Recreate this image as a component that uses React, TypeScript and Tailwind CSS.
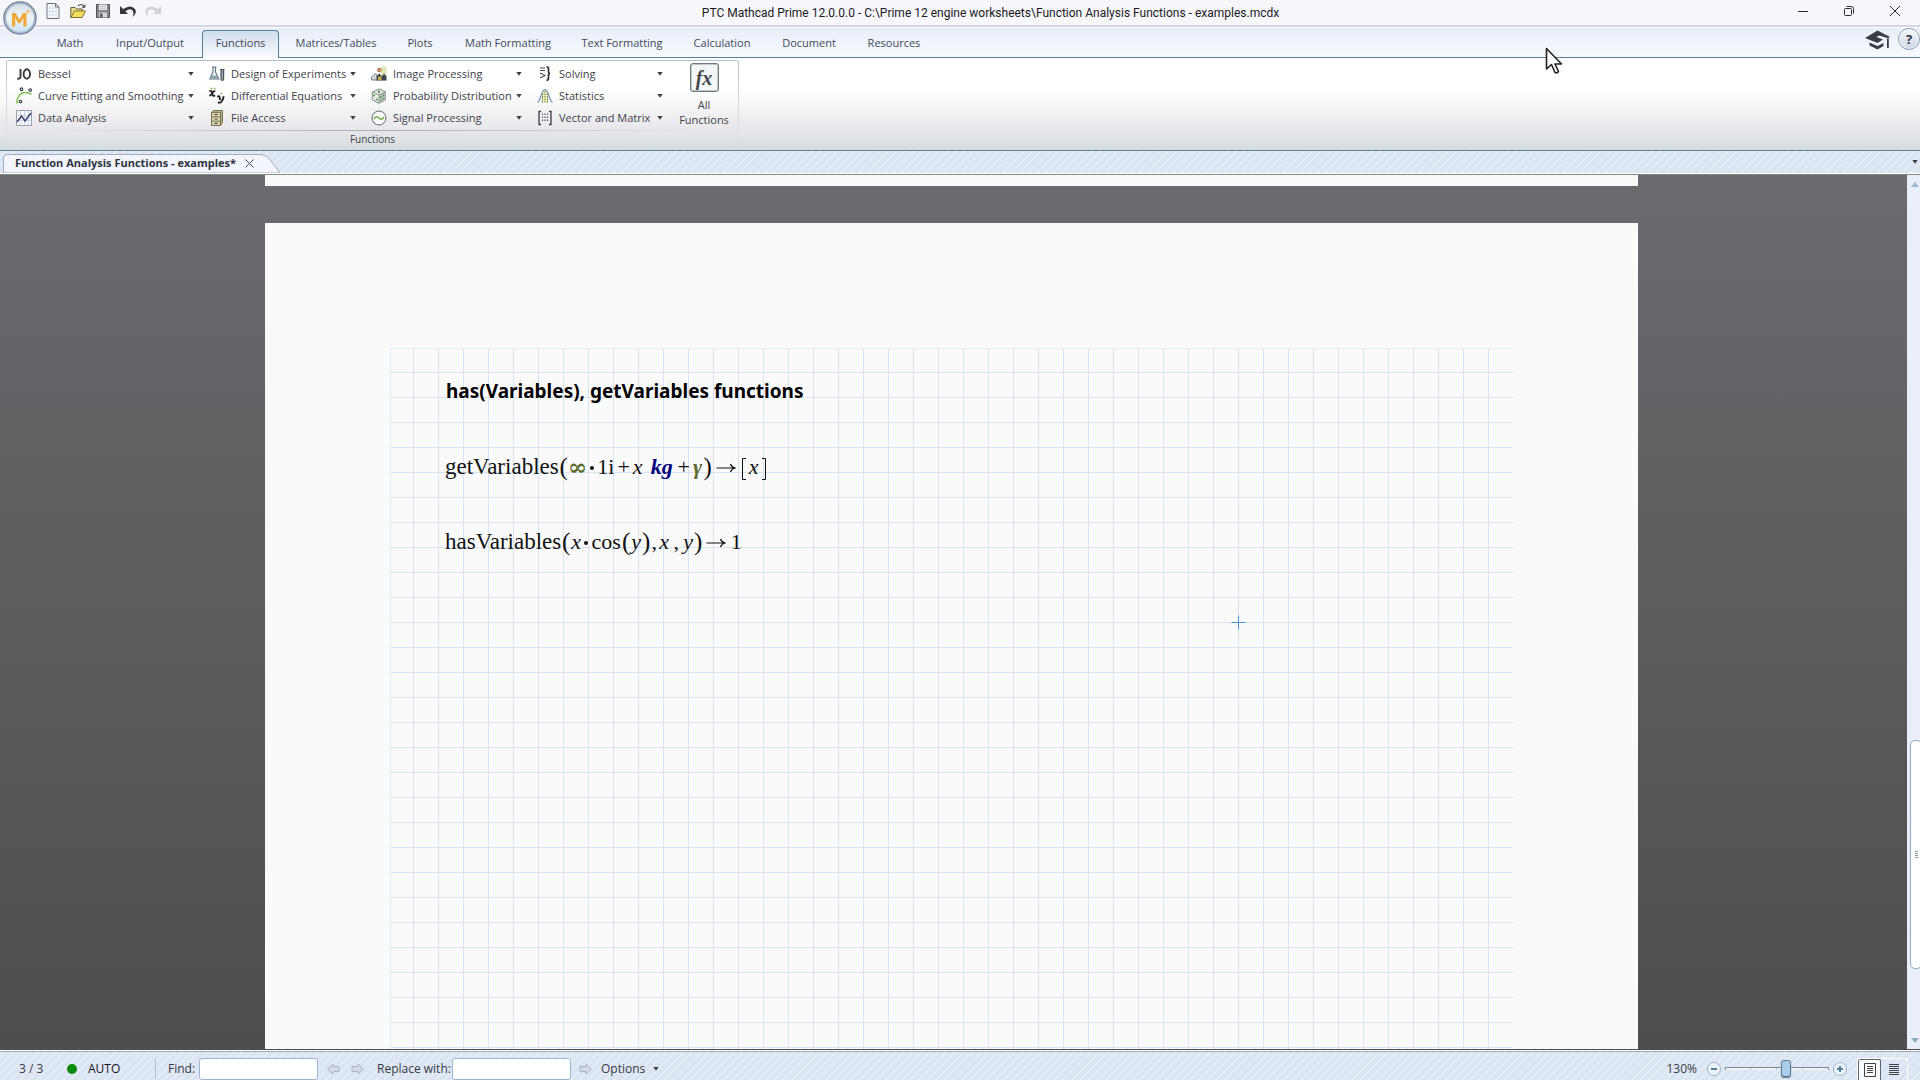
import type { ReactNode } from "react";

const hatch =
    "bg-[#dbe4f2] bg-[repeating-linear-gradient(135deg,#ffffff00_0px,#ffffff00_3px,#ffffff59_4px,#ffffff00_6px)]";

const tabs = [
    { label: "Math", width: "w-[56px]" },
    { label: "Input/Output", width: "w-[94px]" },
    { label: "Functions", width: "w-[77px]" },
    { label: "Matrices/Tables", width: "w-[104px]" },
    { label: "Plots", width: "w-[54px]" },
    { label: "Math Formatting", width: "w-[112px]" },
    { label: "Text Formatting", width: "w-[106px]" },
    { label: "Calculation", width: "w-[84px]" },
    { label: "Document", width: "w-[80px]" },
    { label: "Resources", width: "w-[80px]" },
];

function Icon({ children, size = "size-4" }: { children: ReactNode; size?: string }) {
    return (
        <svg viewBox="0 0 16 16" className={`${size} shrink-0 overflow-visible`} fill="none" aria-hidden="true">
            {children}
        </svg>
    );
}

function Caret() {
    return (
        <svg viewBox="0 0 6 4" className="h-1 w-1.5 shrink-0" fill="#3d4148" aria-hidden="true">
            <path d="M0.3 0h5.4L3 3.8z" />
        </svg>
    );
}

function BesselIcon() {
    return (
        <Icon>
            <path d="M4.500 3v7.500q0 2.500-3.200 2.300" stroke="#33363c" strokeWidth="1.9" />
            <ellipse cx="10.8" cy="8" rx="3.2" ry="4.7" stroke="#33363c" strokeWidth="1.9" />
        </Icon>
    );
}

function CurveIcon() {
    return (
        <Icon>
            <path d="M0.800 15.500C1 8.500 4.500 4.500 9 4.500q4 0 6.500 2" stroke="#86c05a" strokeWidth="1.6" />
            <g stroke="#33363c" fill="#fff" strokeWidth="1.1">
                <circle cx="5.5" cy="1.2" r="1.3" />
                <circle cx="14.2" cy="2" r="1.3" />
                <circle cx="4.5" cy="13.5" r="1.3" />
            </g>
        </Icon>
    );
}

function DataIcon() {
    return (
        <Icon>
            <rect x="0.5" y="0.5" width="15" height="15" fill="#f6f8fb" stroke="#9aa3b0" />
            <path d="M4.5 1v14M8.5 1v14M12.5 1v14M1 5.5h14M1 10.5h14" stroke="#ccd9ea" />
            <path d="M1 12l4.5-6L9 11l6-8" stroke="#3f4274" strokeWidth="1.5" />
        </Icon>
    );
}

function FlaskIcon() {
    return (
        <Icon>
            <path d="M3 1h4.5M4 1v5L0.8 13h9L6.5 6V1" stroke="#62717b" strokeWidth="1.1" fill="#eef5f6" />
            <path d="M2.5 9.5h5.5l1.5 3.3H1z" fill="#8da5ad" />
            <path d="M11 3.5h4.5M12 4v9.5q1.3 2 2.6 0V4" stroke="#4b5359" strokeWidth="1.2" fill="#9aa9b0" />
        </Icon>
    );
}

function DiffIcon() {
    return (
        <Icon>
            <path
                d="M0.5 3.4q1.600-1.200 2.200 0.400l1 3.400q0.500 1.400 2.300 0M6.300 3.200q-1.600-0.400-2.900 1.900T0.300 7.500"
                stroke="#222"
                strokeWidth="1.8"
            />
            <path
                d="M8.300 8.800q1.900-1.200 2.300 0.400l0.500 2.800M14.600 8.300q-0.200 3.700-2.400 5.600-1.500 1.200-3.300 0.500"
                stroke="#222"
                strokeWidth="1.9"
            />
            <path d="M1.6 0.5h1.700M4.700 0.500h1.700M11.500 5.500h1.900" stroke="#88b44c" strokeWidth="1.6" />
        </Icon>
    );
}

function FileIcon() {
    return (
        <Icon>
            <path d="M2.5 2.5l2-2h9v12l-2 3h-9z" fill="#b5ae84" stroke="#6f6b4b" strokeWidth="0.9" />
            <path d="M2.5 2.5h9v13h-9z" fill="#dcd7b2" stroke="#6f6b4b" strokeWidth="0.9" />
            <path d="M3 6.8h8M3 11.2h8" stroke="#6f6b4b" strokeWidth="0.9" />
            <path d="M5.5 4.7h3M5.5 9h3M5.5 13.3h3" stroke="#4d4a35" strokeWidth="1.2" />
        </Icon>
    );
}

function ImageIcon() {
    return (
        <Icon>
            <path d="M10 0.5h5.500v14H10z" fill="#dfe6b4" />
            <path d="M0.5 14v-3l4-3.500 3 3.500v3z" fill="#cfd6da" stroke="#6c7780" strokeWidth="0.9" />
            <path d="M5.500 14.500V10l2.800-2.500L11 10.500l2-3 2.500 3v4z" fill="#3d4652" />
            <path d="M7 10.500h3.500v3.500H7z" fill="#c5ae46" />
            <circle cx="8.3" cy="4" r="1.7" fill="#e0b36a" stroke="#a04a33" strokeWidth="0.9" />
        </Icon>
    );
}

function DiceIcon() {
    return (
        <Icon>
            <path d="M1.2 4.2L8.500 0.800l6 3v8L8 15.300l-6.800-3.500z" fill="#e4ebe2" stroke="#7d8a82" strokeWidth="1" />
            <path d="M8 6.8l6.5-3v8L8 15.3z" fill="#b9c4ba" />
            <path d="M1.2 4.2L8 6.8v8.5M8 6.8l6.5-3" stroke="#7d8a82" strokeWidth="0.8" />
            <g fill="#5c8f4c">
                <circle cx="8" cy="3.7" r="1.2" />
                <circle cx="3" cy="7.5" r="1" />
                <circle cx="5.8" cy="11.5" r="1" />
                <circle cx="10" cy="9" r="0.9" />
                <circle cx="12.5" cy="7.5" r="0.9" />
                <circle cx="10" cy="12.3" r="0.9" />
                <circle cx="12.5" cy="10.8" r="0.9" />
            </g>
        </Icon>
    );
}

function SignalIcon() {
    return (
        <Icon>
            <circle cx="8" cy="8" r="7" fill="#fafcfa" stroke="#5f6a70" strokeWidth="1" />
            <path d="M3 9q2.5-4 5-1t5-1" stroke="#77b04e" strokeWidth="1.5" />
        </Icon>
    );
}

function SolvingIcon() {
    return (
        <Icon>
            <path d="M3 2h5M3 4.5h5M3 7l5 2.5L3 12" stroke="#4a4d54" strokeWidth="1.1" />
            <path d="M9.5 0.8q2 0 2 2V6q0 1.5 1.5 1.5-1.5 0-1.5 1.5v3.3q0 2-2 2" stroke="#26282d" strokeWidth="1.6" />
        </Icon>
    );
}

function StatsIcon() {
    return (
        <Icon>
            <path d="M4.5 14V6Q8-3 11.5 6v8z" fill="#e6edb6" />
            <path d="M5.5 14.5V5M8 14.5V2M10.5 14.5V5" stroke="#68734a" strokeWidth="0.9" strokeDasharray="1.5 1" />
            <path d="M0.5 14.5C4 13 4 1.5 8 1.5s4 11.5 7.5 13" stroke="#6f90b5" strokeWidth="1.2" />
        </Icon>
    );
}

function MatrixIcon() {
    return (
        <Icon>
            <path d="M4 1.5H2v13h2M12 1.5h2v13h-2" stroke="#3b3e45" strokeWidth="1.3" />
            <path d="M5.5 3.5v9M8 3.5v9M10.5 3.5v9" stroke="#565a62" strokeWidth="1.2" strokeDasharray="1.5 1.5" />
        </Icon>
    );
}

const functionColumns = [
    {
        width: "w-[193px]",
        items: [
            { label: "Bessel", icon: <BesselIcon /> },
            { label: "Curve Fitting and Smoothing", icon: <CurveIcon /> },
            { label: "Data Analysis", icon: <DataIcon /> },
        ],
    },
    {
        width: "w-[162px]",
        items: [
            { label: "Design of Experiments", icon: <FlaskIcon /> },
            { label: "Differential Equations", icon: <DiffIcon /> },
            { label: "File Access", icon: <FileIcon /> },
        ],
    },
    {
        width: "w-[166px]",
        items: [
            { label: "Image Processing", icon: <ImageIcon /> },
            { label: "Probability Distribution", icon: <DiceIcon /> },
            { label: "Signal Processing", icon: <SignalIcon /> },
        ],
    },
    {
        width: "w-[141px]",
        items: [
            { label: "Solving", icon: <SolvingIcon /> },
            { label: "Statistics", icon: <StatsIcon /> },
            { label: "Vector and Matrix", icon: <MatrixIcon /> },
        ],
    },
];

function TitleBar() {
    return (
        <header className="flex h-7 shrink-0 items-start border-b border-white bg-[#f7f6fb] shadow-[inset_0_-2px_0_#d5d6e3]">
            <div className="flex h-[22px] items-center pl-10">
                <button aria-label="New" className="flex w-[25px] justify-center">
                    <Icon>
                        <path d="M2 0.5h8.5l3.5 3.5v11.5H2z" fill="#fff" stroke="#6a7078" />
                        <path d="M5 1v14M8 1v14M11 4v11M2.5 5h11M2.5 8.5h11M2.5 12h11" stroke="#c5d6e8" strokeWidth="0.8" />
                        <path d="M10.5 0.5V4H14" stroke="#6a7078" />
                    </Icon>
                </button>
                <button aria-label="Open" className="flex w-[25px] justify-center">
                    <Icon>
                        <path d="M0.8 14.5V4.5h4.5l1.5 1.5h5.5v3" fill="#e8d98e" stroke="#66602f" />
                        <path d="M0.8 14.5L4.5 8h11l-3.3 6.5z" fill="#f6de5b" stroke="#7d7332" />
                        <path d="M8 3q3-3 5.5 0" stroke="#444" strokeWidth="1.2" />
                        <path d="M15.3 1.2v3.6h-3.6z" fill="#444" />
                    </Icon>
                </button>
                <button aria-label="Save" className="flex w-[25px] justify-center">
                    <Icon>
                        <path d="M1.5 1.5h13v13h-13z" fill="#85858b" stroke="#55555c" />
                        <path d="M4 1.5h8v5.5H4z" fill="#eceef0" />
                        <path d="M5 3.5h6M5 5.3h6" stroke="#a5a7ad" strokeWidth="0.7" />
                        <path d="M4 9.5h8v5H4z" fill="#d5d7da" />
                        <path d="M5 10.5h2.5v4H5z" fill="#505057" />
                    </Icon>
                </button>
                <button aria-label="Undo" className="flex w-[25px] justify-center">
                    <Icon>
                        <path d="M0 3v8h8L5.3 8.3Q10.5 4.5 13 8q1.3 2.5-.5 6Q17.5 10 15 6 11 1 3.2 6z" fill="#33363b" />
                    </Icon>
                </button>
                <button aria-label="Redo" className="flex w-[25px] justify-center">
                    <Icon>
                        <path d="M16 3v8H8l2.7-2.7Q5.5 4.5 3 8q-1.3 2.5.5 6Q-1.5 10 1 6 5 1 12.8 6z" fill="#d0d1d6" />
                    </Icon>
                </button>
            </div>
            <h1 className="flex-1 pl-9 text-center font-['Roboto','Open_Sans',sans-serif] text-[12px] leading-[26px] text-[#1b1b1f]">
                PTC Mathcad Prime 12.0.0.0 - C:\Prime 12 engine worksheets\Function Analysis Functions - examples.mcdx
            </h1>
            <div className="flex h-[22px] items-center pr-0.5">
                <button aria-label="Minimize" className="flex w-[46px] justify-center">
                    <svg viewBox="0 0 10 10" className="size-2.5" stroke="#2c2c30" aria-hidden="true">
                        <path d="M0 5.5h10" />
                    </svg>
                </button>
                <button aria-label="Restore" className="flex w-[46px] justify-center">
                    <svg viewBox="0 0 10 10" className="size-2.5" stroke="#2c2c30" fill="none" aria-hidden="true">
                        <rect x="0.5" y="2.5" width="7" height="7" rx="1" />
                        <path d="M2.5 0.5h5q2 0 2 2v5" />
                    </svg>
                </button>
                <button aria-label="Close" className="flex w-[46px] justify-center">
                    <svg viewBox="0 0 10 10" className="size-2.5" stroke="#2c2c30" aria-hidden="true">
                        <path d="M0 0l10 10M10 0L0 10" />
                    </svg>
                </button>
            </div>
        </header>
    );
}

function AppButton() {
    return (
        <button aria-label="Application menu" className="absolute top-px left-[3px] z-20">
            <svg viewBox="0 0 34 34" className="size-[34px]" aria-hidden="true">
                <defs>
                    <linearGradient id="orb" x1="0" y1="0" x2="0" y2="1">
                        <stop offset="0" stopColor="#d3dbe5" />
                        <stop offset="0.5" stopColor="#eff4fa" />
                        <stop offset="1" stopColor="#c4e2f6" />
                    </linearGradient>
                </defs>
                <circle cx="17" cy="17" r="16" fill="url(#orb)" stroke="#6f8498" strokeWidth="1.5" />
                <circle cx="17" cy="17" r="14.5" fill="none" stroke="#a9bccd" strokeWidth="1.5" />
                <path d="M9 25.500V12h3.500l3.800 6.500L20 12h3.500v13.500h-3.200V17l-3 5.200h-2L12.200 17v8.500z" fill="#efa83a" />
                <path d="M24.800 8.500v4M22.800 10.500h4" stroke="#f3bc66" strokeWidth="1.2" />
            </svg>
        </button>
    );
}

function TabRow() {
    return (
        <nav className="flex h-[30px] shrink-0 items-end border-b border-[#5b7f91] bg-linear-to-b from-[#e9edf7] to-[#f6faff]">
            <div className="flex flex-1 items-end gap-[5px] pl-[42px] text-[11px] leading-7 whitespace-nowrap text-[#41495c]">
                {tabs.map(({ label, width }) =>
                    label === "Functions" ? (
                        <button
                            key={label}
                            className={`${width} -mb-px h-7 rounded-t-[4px] border border-b-0 border-[#55809a] bg-linear-to-b from-[#cfdceb] to-[#fbfcff] pb-[3px] leading-6`}
                        >
                            {label}
                        </button>
                    ) : (
                        <button key={label} className={`${width} h-7`}>
                            {label}
                        </button>
                    ),
                )}
            </div>
            <div className="flex h-full items-start gap-2">
                <button aria-label="Learning" className="mt-0.5">
                    <svg viewBox="0 0 25 20" className="h-5 w-[25px]" fill="#3b3d44" aria-hidden="true">
                        <path d="M0 8L12.5 0.5 25 7l-2 1.2-9-2.7-2.5 1.500 6.500 2.500-5.500 3.500z" />
                        <path d="M4.500 12.500l8 3.500 6-3v3l-6 3.500-8-4z" />
                        <path d="M22 8.500h1.800V18H22z" />
                    </svg>
                </button>
                <button
                    aria-label="Help"
                    className="size-[22px] rounded-full border border-[#8fa3b8] bg-linear-to-b from-[#f5f8fb] to-[#cad7e4] text-[13px] leading-5 font-bold text-[#2f343e] shadow-[inset_0_0_0_1px_#ffffffb0]"
                >
                    ?
                </button>
            </div>
        </nav>
    );
}

function Ribbon() {
    return (
        <section className="h-[93px] shrink-0 border-b border-[#5f8298] bg-linear-to-b from-white from-35% via-[#e9e8ec] via-75% to-[#d6dddf] pt-0.5 pl-[6px] text-[11px] text-[#3f434a]">
            <div className="relative flex h-[88px] w-[733px] rounded-t-[4px] border-t border-[#b9bdc9] pt-[2px] pl-[10px]">
                <div className="absolute inset-y-0 left-0 w-px bg-linear-to-b from-[#b9bdc9] to-transparent" />
                <div className="absolute inset-y-0 right-0 w-px bg-linear-to-b from-[#b9bdc9] to-transparent" />
                <div className="absolute inset-x-10 top-[69px] h-px bg-linear-to-r from-transparent via-[#a9adb3] to-transparent" />
                <div className="flex">
                    {functionColumns.map((column) => (
                        <div key={column.width} className={`${column.width} flex flex-col`}>
                            {column.items.map((item) => (
                                <button
                                    key={item.label}
                                    className="flex h-[22px] items-center pr-[15px] text-left whitespace-nowrap"
                                >
                                    {item.icon}
                                    <span className="min-w-0 flex-1 pl-[6px]">{item.label}</span>
                                    <Caret />
                                </button>
                            ))}
                        </div>
                    ))}
                    <button className="flex w-[52px] flex-col items-center leading-[15px]">
                        <span className="mb-[5px] flex size-[29px] shrink-0 items-center justify-center rounded-[3px] border border-[#6f777c] bg-[#f3f6f6] shadow-[inset_0_0_0_1px_#c3cacc]">
                            <span className="font-['Liberation_Serif',serif] text-[20px] leading-6 font-bold text-[#44474c] italic">
                                fx
                            </span>
                        </span>
                        <span>All</span>
                        <span>Functions</span>
                    </button>
                </div>
                <p className="absolute inset-x-0 top-[70px] text-center text-[10px] leading-4">Functions</p>
            </div>
        </section>
    );
}

function DocumentTabs() {
    return (
        <div className={`${hatch} flex h-[23px] shrink-0 items-end justify-between border-b border-white`}>
            <div className="relative flex h-5 w-[280px] items-center gap-[9px] pl-[15px]">
                <svg viewBox="0 0 280 20" className="absolute inset-0 h-full w-full" aria-hidden="true">
                    <path d="M3.5 20V5q0-3.500 3.500-3.500h254q5 0 9 5L280 20z" fill="#f2f5fc" stroke="#a3adbb" />
                </svg>
                <span className="relative text-[11px] leading-5 font-bold whitespace-nowrap text-[#2d333f]">
                    Function Analysis Functions - examples*
                </span>
                <button aria-label="Close worksheet" className="relative">
                    <svg viewBox="0 0 9 9" className="size-[9px]" stroke="#444b57" aria-hidden="true">
                        <path d="M0.5 0.5l8 8M8.5 0.5l-8 8" />
                    </svg>
                </button>
            </div>
            <button aria-label="Worksheet list" className="flex h-full items-center pr-[2px]">
                <Caret />
            </button>
        </div>
    );
}

function Token({ w, className = "", children }: { w: string; className?: string; children: ReactNode }) {
    return <span className={`${w} ${className} flex shrink-0 justify-center`}>{children}</span>;
}

function Paren({ children }: { children: ReactNode }) {
    return (
        <Token w="w-2" className="text-[25px]">
            {children}
        </Token>
    );
}

function Arrow() {
    return (
        <Token w="w-7">
            <svg viewBox="0 0 20 10" className="mt-[11px] h-2.5 w-5" stroke="#111" fill="none" aria-hidden="true">
                <path d="M0.5 5h18M14.5 1q1 3 4.5 4-3.500 1-4.500 4" strokeWidth="1.2" />
            </svg>
        </Token>
    );
}

function Dot() {
    return (
        <Token w="w-2">
            <span className="mt-[14px] size-1 rounded-full bg-[#111]" />
        </Token>
    );
}

function Bracket({ side }: { side: "left" | "right" }) {
    return (
        <Token w="w-2">
            <svg viewBox="0 0 4 22" className="mt-[6px] h-[22px] w-1" stroke="#111" fill="none" aria-hidden="true">
                <path d={side === "left" ? "M4 0.5H0.5v21H4" : "M0 0.5h3.5v21H0"} />
            </svg>
        </Token>
    );
}

function Worksheet() {
    return (
        <article className="min-h-0 w-[1373px] flex-1 bg-[#fafafa] px-[125px] pt-[125px]">
            <div className="relative h-full border-t border-l border-[#e4ecf8] bg-[linear-gradient(to_right,#d8e3f5_1px,transparent_1px),linear-gradient(to_bottom,#d8e3f5_1px,transparent_1px)] bg-size-[25px_25px] bg-position-[22px_23px] pt-[30px] pl-[54px] text-[#111]">
                <h2 className="pl-px font-['Noto_Sans','Open_Sans',sans-serif] text-[19px] leading-6 font-bold text-black">
                    has(Variables), getVariables functions
                </h2>
                <div className="mt-[49px] flex h-[30px] font-['Liberation_Serif',serif] text-[22px] leading-[30px]">
                    <span className="mr-px text-[23px]">getVariables</span>
                    <Paren>(</Paren>
                    <Token w="w-5" className="font-['DejaVu_Serif',serif] text-[23px] font-bold text-[#5d6b2f]">
                        ∞
                    </Token>
                    <Dot />
                    <Token w="w-5">1i</Token>
                    <Token w="w-4">+</Token>
                    <Token w="w-3" className="italic">x</Token>
                    <Token w="w-8" className="pl-1 font-bold text-[#00007f] italic">kg</Token>
                    <Token w="w-4">+</Token>
                    <Token w="w-3" className="font-bold text-[#5d6b2f] italic">γ</Token>
                    <Paren>)</Paren>
                    <Arrow />
                    <Bracket side="left" />
                    <Token w="w-3" className="italic">x</Token>
                    <Bracket side="right" />
                </div>
                <div className="mt-[45px] flex h-[30px] font-['Liberation_Serif',serif] text-[22px] leading-[30px]">
                    <span className="mr-px text-[23px]">hasVariables</span>
                    <Paren>(</Paren>
                    <Token w="w-3" className="italic">x</Token>
                    <Dot />
                    <Token w="w-8">cos</Token>
                    <Paren>(</Paren>
                    <Token w="w-3" className="italic">y</Token>
                    <Paren>)</Paren>
                    <Token w="w-2">,</Token>
                    <Token w="w-3" className="italic">x</Token>
                    <Token w="w-3">,</Token>
                    <Token w="w-3" className="italic">y</Token>
                    <Paren>)</Paren>
                    <Arrow />
                    <Token w="w-3">1</Token>
                </div>
                {/* insertion crosshair */}
                <svg viewBox="0 0 15 15" className="absolute top-[266px] left-[840px] size-[15px]" stroke="#4a90d9" aria-hidden="true">
                    <path d="M7.5 0.5v14M0.5 7.5h14" />
                </svg>
            </div>
        </article>
    );
}

function ScrollBar() {
    return (
        <div className="flex w-[13px] shrink-0 flex-col overflow-hidden bg-[#e9eef9]">
            <svg viewBox="0 0 8 5" className="mt-[7px] ml-1 h-[5px] w-2 shrink-0" fill="#9cb8cf" aria-hidden="true">
                <path d="M4 0l4 5H0z" />
            </svg>
            <div className="flex-[553]" />
            <div className="ml-[3px] flex w-[12px] flex-[227] flex-col items-center justify-center gap-px rounded-[5px] border border-[#8fa9c6] bg-white">
                <span className="h-px w-[3px] bg-[#8d99ab]" />
                <span className="h-px w-[3px] bg-[#8d99ab]" />
                <span className="h-px w-[3px] bg-[#8d99ab]" />
                <span className="h-px w-[3px] bg-[#8d99ab]" />
            </div>
            <div className="flex-[69]" />
            <svg viewBox="0 0 8 5" className="mb-[6px] ml-1 h-[5px] w-2 shrink-0" fill="#8fb0bf" aria-hidden="true">
                <path d="M0 0h8L4 5z" />
            </svg>
        </div>
    );
}

function StepArrow({ flip = false }: { flip?: boolean }) {
    return (
        <svg
            viewBox="0 0 14 12"
            className={flip ? "h-3 w-3.5 rotate-180" : "h-3 w-3.5"}
            fill="#d3dae5"
            stroke="#aab3c1"
            aria-hidden="true"
        >
            <path d="M1 3.5h6V1l5.5 5L7 11V8.5H1z" />
        </svg>
    );
}

function StatusBar() {
    return (
        <footer
            className={`${hatch} flex h-[30px] shrink-0 items-center border-t border-white pt-1.5 text-[12px] text-[#353b48] shadow-[inset_0_1px_0_#a4a9b0]`}
        >
            <span className="w-[67px] pl-[19px]">3 / 3</span>
            <span className="size-2.5 rounded-full bg-[#0b8a0b]" />
            <span className="ml-[11px] w-[67px] text-[#15171c]">AUTO</span>
            <span className="h-5 w-px bg-[#b3bfd0]" />
            <label htmlFor="find" className="w-[43px] pl-3">
                Find:
            </label>
            <input id="find" className="h-[22px] w-[119px] rounded-[3px] border border-[#9db5d3] bg-white px-1" />
            <button aria-label="Find previous" className="ml-2">
                <StepArrow flip />
            </button>
            <button aria-label="Find next" className="ml-[11px]">
                <StepArrow />
            </button>
            <label htmlFor="replace" className="ml-3 w-[75px] whitespace-nowrap">
                Replace with:
            </label>
            <input id="replace" className="h-[22px] w-[119px] rounded-[3px] border border-[#9db5d3] bg-white px-1" />
            <button aria-label="Replace" className="ml-2">
                <StepArrow />
            </button>
            <button className="ml-2 flex items-center gap-2">
                Options
                <Caret />
            </button>
            <div className="ml-auto flex items-center">
                <label htmlFor="zoom" className="mr-[10px]">
                    130%
                </label>
                <button aria-label="Zoom out">
                    <svg viewBox="0 0 14 14" className="size-3.5" fill="#edf3fa" stroke="#9fb3c8" aria-hidden="true">
                        <circle cx="7" cy="7" r="6.5" />
                        <path d="M4 7h6" stroke="#4f7f9b" strokeWidth="2" />
                    </svg>
                </button>
                <div className="relative mx-1 flex h-5 w-[104px] items-center">
                    <svg viewBox="0 0 104 8" className="absolute inset-x-0 top-1.5 h-2 w-full" fill="none" aria-hidden="true">
                        <path d="M0.5 5V2.5h103V5M25.5 2.5V5M51.5 2.5V5M77.5 2.5V5" stroke="#7f8996" />
                        <path d="M1 4h102" stroke="#fff" />
                    </svg>
                    <input
                        id="zoom"
                        type="range"
                        min={0}
                        max={100}
                        defaultValue={60}
                        className="relative h-5 w-full appearance-none bg-transparent [&::-webkit-slider-thumb]:h-[17px] [&::-webkit-slider-thumb]:w-[10px] [&::-webkit-slider-thumb]:appearance-none [&::-webkit-slider-thumb]:rounded-[3px] [&::-webkit-slider-thumb]:border [&::-webkit-slider-thumb]:border-[#5f7b94] [&::-webkit-slider-thumb]:bg-[#a9cdea] [&::-webkit-slider-thumb]:shadow-[0_1px_1px_#6b7480]"
                    />
                </div>
                <button aria-label="Zoom in">
                    <svg viewBox="0 0 14 14" className="size-3.5" fill="#edf3fa" stroke="#9fb3c8" aria-hidden="true">
                        <circle cx="7" cy="7" r="6.5" />
                        <path d="M4 7h6M7 4v6" stroke="#4f7f9b" strokeWidth="2" />
                    </svg>
                </button>
                <div className="mr-3 ml-[10px] flex h-[22px] w-[51px] overflow-hidden rounded-t-[3px] border border-b-0 border-white">
                    <button
                        aria-label="Page view"
                        className="flex w-[23px] items-center justify-center rounded-t-[2px] border border-b-0 border-[#5e646e] bg-[#fafafd]"
                    >
                        <svg viewBox="0 0 12 14" className="h-3.5 w-3" fill="#fff" stroke="#3d4148" aria-hidden="true">
                            <path d="M0.5 0.5h11v13H0.5z" />
                            <path d="M3 3.5h6M3 5.5h6M3 7.5h6M3 9.5h6" />
                        </svg>
                    </button>
                    <button aria-label="Draft view" className="flex flex-1 items-center justify-center">
                        <svg viewBox="0 0 10 12" className="h-3 w-2.5" stroke="#3d4148" aria-hidden="true">
                            <path d="M0 1.5h10M0 3.5h10M0 5.5h10M0 7.5h10M0 9.5h10M0 11.5h10" />
                        </svg>
                    </button>
                </div>
            </div>
        </footer>
    );
}

export default function App() {
    return (
        <div className="relative flex h-screen flex-col overflow-hidden font-['Open_Sans','Noto_Sans',sans-serif]">
            <TitleBar />
            <AppButton />
            <TabRow />
            <Ribbon />
            <DocumentTabs />
            <div className="flex min-h-0 flex-1 border-t border-b border-t-[#85858a] border-b-[#4a4a4c]">
                <main className="flex flex-1 flex-col items-center overflow-hidden bg-linear-to-b from-[#6b6a6f] to-[#4e4e4e] pr-1">
                    <div className="mb-[37px] h-[11px] w-[1373px] shrink-0 bg-[#fafafa]" />
                    <Worksheet />
                </main>
                <ScrollBar />
            </div>
            <StatusBar />
            {/* mouse pointer */}
            <svg viewBox="0 0 18 28" className="absolute top-[47px] left-[1545px] z-30 h-7 w-[18px]" aria-hidden="true">
                <path
                    d="M1.5 1.5v20.5l5-4.500 3.500 8q2 1 3.500-1l-3.500-7.500h6.500z"
                    fill="#fff"
                    stroke="#222"
                    strokeWidth="1.6"
                    strokeLinejoin="round"
                />
            </svg>
        </div>
    );
}
